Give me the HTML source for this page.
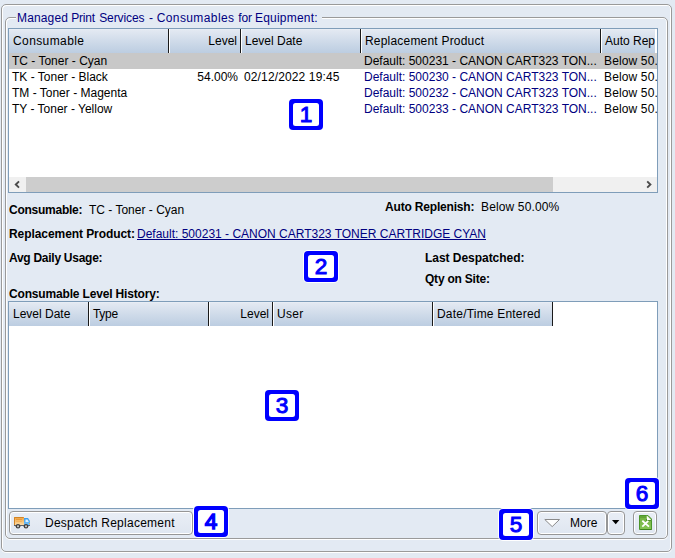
<!DOCTYPE html>
<html><head><meta charset="utf-8">
<style>
html,body{margin:0;padding:0;}
body{width:675px;height:558px;background:#E3EAF3;position:relative;overflow:hidden;font-family:"Liberation Sans",Arial,sans-serif;font-size:12px;color:#000;}
.abs{position:absolute;}
.t{position:absolute;white-space:nowrap;line-height:14px;height:14px;}
.b{font-weight:bold;}
#outer{left:1px;top:4px;width:671px;height:548px;box-sizing:border-box;border:1px solid #9A9A9A;border-radius:5px;box-shadow:inset 1px 1px 0 #fff, inset -1px 0 0 #fff, 0 1px 0 #fff;}
#fs{left:5px;top:17px;width:663px;height:522px;box-sizing:border-box;border:1px solid #9A9A9A;border-radius:5px;box-shadow:inset 1px 1px 0 #fff, inset -1px 0 0 #fff, 0 1px 0 #fff;}
#legend{left:16px;top:9px;width:306px;height:16px;background:#E3EAF3;}
.tbl{box-sizing:border-box;border:1px solid #7F9DB9;background:#fff;overflow:hidden;}
.hdr{position:absolute;top:0;height:24px;background:linear-gradient(#EDF1F7 0px,#E3E9F2 1px,#CEDAE9 13px,#BCCDE1 24px);}
.hc{position:absolute;top:0;height:24px;box-sizing:border-box;border-right:1px solid #fff;}
.hc:after{content:"";position:absolute;right:0;top:0;width:1px;height:24px;background:#1a1a1a;}
.hc span{position:absolute;top:5px;left:4px;line-height:14px;white-space:nowrap;}
.hc span.r{left:auto;right:4px;}
.hc span.l3{left:3px;}
.hc.nl:after{display:none;}
.row{position:absolute;left:0;height:16px;}
.row span{position:absolute;top:1px;line-height:14px;white-space:nowrap;}
.nv{color:#000080;}
.mark{position:absolute;box-sizing:border-box;width:34px;height:31px;background:#0000FF;border-radius:4px;color:#0000FF;font-weight:normal;-webkit-text-stroke:1px #0000FF;font-size:22.6px;line-height:32px;box-shadow:0 0 0 1px #fff;text-align:center;font-family:"Liberation Sans",sans-serif;}
.mark:before{content:"";position:absolute;left:4px;top:4px;right:4px;bottom:4px;background:#fff;border-radius:2.5px;}
.mark span{position:relative;}
.btn{position:absolute;box-sizing:border-box;border:1px solid #969696;border-radius:4px;background:linear-gradient(#E9EEF6 0%,#E4EAF3 50%,#DFE6F0 100%);box-shadow:inset 0 0 0 1px #fff;}
</style></head><body>
<div class="abs" id="outer"></div>
<div class="abs" id="fs"></div>
<div class="abs" id="legend"></div>
<div class="abs" id="lg" style="left:0;top:11px;color:#000080;height:14px;"><span class="t" style="left:17px;top:0;letter-spacing:0.15px;">Managed</span><span class="t" style="left:71.2px;top:0;letter-spacing:-0.2px;">Print</span><span class="t" style="left:99.2px;top:0;letter-spacing:-0.1px;">Services</span><span class="t" style="left:149px;top:0;">-</span><span class="t" style="left:156.7px;top:0;letter-spacing:0.4px;">Consumables</span><span class="t" style="left:238.3px;top:0;letter-spacing:-0.2px;">for</span><span class="t" style="left:255px;top:0;letter-spacing:0.2px;">Equipment:</span></div>

<!-- table 1 -->
<div class="abs tbl" id="t1" style="left:8px;top:28px;width:650px;height:165px;">
  <div class="hdr" style="left:0;width:646px;"></div>
  <div class="hc" style="left:0;width:161px;"><span style="letter-spacing:0.4px">Consumable</span></div>
  <div class="hc" style="left:161px;width:72px;"><span class="r">Level</span></div>
  <div class="hc" style="left:233px;width:120px;"><span class="l3">Level Date</span></div>
  <div class="hc" style="left:353px;width:240px;"><span class="l3" style="letter-spacing:0.2px">Replacement Product</span></div>
  <div class="hc nl" style="left:593px;width:53px;border:0;overflow:hidden;"><span class="l3">Auto Rep</span></div>
  <div class="row" style="top:24px;width:648px;background:#C8C8C8;">
    <span style="left:3px;">TC - Toner - Cyan</span>
    <span style="left:355px;">Default: 500231 - CANON CART323 TON...</span>
    <span style="left:595px;letter-spacing:0.14px;">Below 50.</span>
  </div>
  <div class="row" style="top:40px;width:648px;">
    <span style="left:3px;">TK - Toner - Black</span>
    <span style="right:419px;">54.00%</span>
    <span style="left:235px;letter-spacing:0.13px;">02/12/2022 19:45</span>
    <span class="nv" style="left:355px;">Default: 500230 - CANON CART323 TON...</span>
    <span style="left:595px;letter-spacing:0.14px;">Below 50.</span>
  </div>
  <div class="row" style="top:56px;width:648px;">
    <span style="left:3px;">TM - Toner - Magenta</span>
    <span class="nv" style="left:355px;">Default: 500232 - CANON CART323 TON...</span>
    <span style="left:595px;letter-spacing:0.14px;">Below 50.</span>
  </div>
  <div class="row" style="top:72px;width:648px;">
    <span style="left:3px;">TY - Toner - Yellow</span>
    <span class="nv" style="left:355px;">Default: 500233 - CANON CART323 TON...</span>
    <span style="left:595px;letter-spacing:0.14px;">Below 50.</span>
  </div>
  <!-- scrollbar -->
  <div class="abs" style="left:0;top:148px;width:648px;height:16px;background:#F0F0F0;"></div>
  <div class="abs" style="left:17px;top:148px;width:527px;height:16px;background:#CDCDCD;"></div>
  <svg class="abs" style="left:0;top:148px;" width="648" height="16" viewBox="0 0 648 16"><path d="M10 4.4 L6.8 7.5 L10 10.6" fill="none" stroke="#4A4A4A" stroke-width="1.9"/><path d="M638.2 4.4 L641.4 7.5 L638.2 10.6" fill="none" stroke="#4A4A4A" stroke-width="1.9"/></svg>
</div>

<!-- detail -->
<div class="t b" style="left:9px;top:203px;letter-spacing:-0.25px;">Consumable:</div>
<div class="t" style="left:89px;top:203px;">TC - Toner - Cyan</div>
<div class="t b" style="left:385px;top:200px;letter-spacing:-0.18px;">Auto Replenish:</div>
<div class="t" style="left:481px;top:200px;letter-spacing:0.14px;">Below 50.00%</div>
<div class="t b" style="left:9px;top:227px;letter-spacing:-0.07px;">Replacement Product:</div>
<div class="t" style="left:137px;top:227px;color:#000080;text-decoration:underline;">Default: 500231 - CANON CART323 TONER CARTRIDGE CYAN</div>
<div class="t b" style="left:9px;top:251px;letter-spacing:-0.27px;">Avg Daily Usage:</div>
<div class="t b" style="left:425px;top:251px;letter-spacing:-0.04px;">Last Despatched:</div>
<div class="t b" style="left:425px;top:272px;letter-spacing:-0.22px;">Qty on Site:</div>
<div class="t b" style="left:9px;top:287px;letter-spacing:-0.17px;">Consumable Level History:</div>

<!-- table 2 -->
<div class="abs tbl" id="t2" style="left:8px;top:301px;width:650px;height:208px;">
  <div class="hdr" style="left:0;width:545px;"></div>
  <div class="hc" style="left:0;width:81px;"><span>Level Date</span></div>
  <div class="hc" style="left:81px;width:120px;"><span class="l3" style="letter-spacing:-0.3px">Type</span></div>
  <div class="hc" style="left:201px;width:64px;"><span class="r">Level</span></div>
  <div class="hc" style="left:265px;width:160px;"><span class="l3" style="letter-spacing:0.3px">User</span></div>
  <div class="hc" style="left:425px;width:120px;"><span class="l3" style="letter-spacing:0.2px">Date/Time Entered</span></div>
</div>

<!-- buttons -->
<div class="btn" style="left:9px;top:511px;width:184px;height:24px;"></div>
<svg class="abs" style="left:13px;top:515px;" width="18" height="14" viewBox="13 515 18 14">
  <defs><linearGradient id="og" x1="0" y1="0" x2="0" y2="1"><stop offset="0" stop-color="#EFA03A"/><stop offset="1" stop-color="#FCE3B5"/></linearGradient>
  <linearGradient id="bg" x1="0" y1="0" x2="0" y2="1"><stop offset="0" stop-color="#3C9CEB"/><stop offset="1" stop-color="#7CC6FA"/></linearGradient></defs>
  <rect x="14" y="517" width="10" height="9" fill="url(#og)"/>
  <path d="M14.5 525.5 V517.5 H23.5" fill="none" stroke="#D28426" stroke-width="1"/>
  <rect x="16" y="519" width="6" height="1" fill="#E89A3C"/>
  <rect x="16" y="521" width="6" height="1" fill="#F3B35E"/>
  <path d="M24 518 H28 L30 521 V526 H24 Z" fill="url(#bg)"/>
  <path d="M25.5 519.5 H27.5 L28.8 522 H25.5 Z" fill="#D9F0FF"/>
  <rect x="29" y="523" width="1" height="1" fill="#F2A637"/>
  <rect x="14" y="525" width="16" height="1" fill="#5A5F6A"/>
  <circle cx="18" cy="526.3" r="2.3" fill="#3C3C3C"/><circle cx="18" cy="526.3" r="1.1" fill="#C9C9C9"/>
  <circle cx="26" cy="526.3" r="2.3" fill="#3C3C3C"/><circle cx="26" cy="526.3" r="1.1" fill="#C9C9C9"/>
</svg>
<div class="t" style="left:45px;top:516px;letter-spacing:0.25px;">Despatch Replacement</div>
<div class="btn" style="left:537px;top:511px;width:70px;height:24px;"></div>
<svg class="abs" style="left:543px;top:517px;" width="20" height="12" viewBox="543 517 20 12"><path d="M544.8 519.5 H559.5 L552.2 526.6 Z" fill="#fff" stroke="#8A8A8A" stroke-width="1" stroke-linejoin="miter"/></svg>
<div class="t" style="left:570px;top:516px;">More</div>
<div class="btn" style="left:607px;top:511px;width:18px;height:24px;"></div>
<svg class="abs" style="left:610px;top:518px;" width="12" height="8" viewBox="610 518 12 8"><path d="M612 520 H619.4 L615.7 524.3 Z" fill="#000"/></svg>
<div class="btn" style="left:633px;top:511px;width:24px;height:24px;"></div>
<svg class="abs" style="left:638px;top:514px;" width="15" height="17" viewBox="638 514 15 17">
  <defs><linearGradient id="gg" x1="0" y1="0" x2="0" y2="1"><stop offset="0" stop-color="#72B043"/><stop offset="1" stop-color="#86C654"/></linearGradient></defs>
  <path d="M639.5 515.5 H648 L651.5 519 V529.5 H639.5 Z" fill="url(#gg)" stroke="#4C962A" stroke-width="1"/>
  <path d="M640.5 529.5 H651.5" stroke="#3F8420" stroke-width="1"/>
  <rect x="640" y="516" width="6" height="2" fill="#63A536"/>
  <path d="M646.8 515.6 L651.4 520.2 H646.8 Z" fill="#fff"/>
  <path d="M646.5 519 V520.5 H651" stroke="#3F8420" stroke-width="0.8" fill="none"/>
  <path d="M642.3 520.8 L649 526.6 M648.3 520.8 L642.3 526.6" stroke="#fff" stroke-width="1.8" fill="none"/>
</svg>

<!-- markers -->
<div class="mark" style="left:289px;top:99px;"><span>1</span></div>
<div class="mark" style="left:304px;top:251px;"><span>2</span></div>
<div class="mark" style="left:265px;top:390px;"><span>3</span></div>
<div class="mark" style="left:194px;top:506px;-webkit-text-stroke-width:1.4px;"><span>4</span></div>
<div class="mark" style="left:499px;top:509px;"><span>5</span></div>
<div class="mark" style="left:625px;top:478px;"><span>6</span></div>
</body></html>
